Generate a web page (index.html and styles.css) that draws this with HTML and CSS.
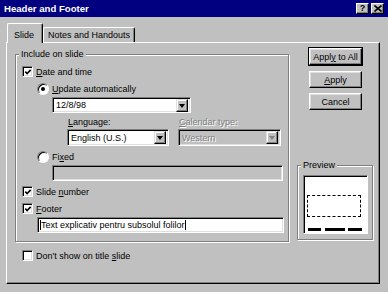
FILE: index.html
```html
<!DOCTYPE html>
<html lang="en">
<head>
  <meta charset="UTF-8">
  <title>Header and Footer</title>
  <link rel="stylesheet" href="styles.css">
</head>
<body>
  <div class="window">
    <div class="titlebar">
      <span class="title">Header and Footer</span>
      <div class="caption-btns">
        <span class="cbtn">?</span>
        <span class="cbtn">
          <svg width="8" height="7" viewBox="0 0 8 7"><path d="M0.5 0.5 L7.5 6.5 M7.5 0.5 L0.5 6.5" stroke="#000" stroke-width="1.6"/></svg>
        </span>
      </div>
    </div>

    <div class="tabs">
      <div class="tab active">Slide</div>
      <div class="tab">Notes and Handouts</div>
    </div>

    <div class="panel">
      <div class="left-col">
        <fieldset class="group include">
          <legend>Include on slide</legend>

          <div class="row ind0 first">
            <span class="check on"><svg width="9" height="9" viewBox="0 0 9 9"><path d="M1.5 3.5 L3.5 5.8 L7.5 1.5" fill="none" stroke="#000" stroke-width="1.8"/></svg></span>
            <span><u>D</u>ate and time</span>
          </div>

          <div class="row ind1 gap4">
            <span class="radio on"></span>
            <span><u>U</u>pdate automatically</span>
          </div>

          <div class="combo date-combo">
            <span class="combo-text">12/8/98</span>
            <span class="arrow"><i></i></span>
          </div>

          <div class="lang-row">
            <div class="field lang">
              <div class="field-label"><u>L</u>anguage:</div>
              <div class="combo">
                <span class="combo-text">English (U.S.)</span>
                <span class="arrow"><i></i></span>
              </div>
            </div>
            <div class="field calendar">
              <div class="field-label disabled"><u>C</u>alendar type:</div>
              <div class="combo off">
                <span class="combo-text">Western</span>
                <span class="arrow"><i></i></span>
              </div>
            </div>
          </div>

          <div class="row ind1 gap4">
            <span class="radio"></span>
            <span>Fi<u>x</u>ed</span>
          </div>

          <div class="textbox fixed-box"></div>

          <div class="row ind0 gap4">
            <span class="check on"><svg width="9" height="9" viewBox="0 0 9 9"><path d="M1.5 3.5 L3.5 5.8 L7.5 1.5" fill="none" stroke="#000" stroke-width="1.8"/></svg></span>
            <span>Slide <u>n</u>umber</span>
          </div>

          <div class="row ind0 gap4">
            <span class="check on"><svg width="9" height="9" viewBox="0 0 9 9"><path d="M1.5 3.5 L3.5 5.8 L7.5 1.5" fill="none" stroke="#000" stroke-width="1.8"/></svg></span>
            <span><u>F</u>ooter</span>
          </div>

          <div class="textbox footer-box white">
            <span class="caret"></span>Text explicativ pentru subsolul folilor<span class="caret"></span>
          </div>
        </fieldset>

        <div class="row dont-show">
          <span class="check"></span>
          <span>Don't show on title <u>s</u>lide</span>
        </div>
      </div>

      <div class="side-col">
        <button class="btn default">Appl<u>y</u> to All</button>
        <button class="btn"><u>A</u>pply</button>
        <button class="btn">Cancel</button>

        <fieldset class="group preview">
          <legend>Preview</legend>
          <div class="preview-page">
            <div class="dash-box"></div>
            <div class="bars">
              <span class="bar b1"></span>
              <span class="bar b2"></span>
              <span class="bar b3"></span>
            </div>
          </div>
        </fieldset>
      </div>
    </div>
  </div>
</body>
</html>
```

FILE: styles.css
```css
body {
  margin: 0;
  font-family: "Liberation Sans", Arial, sans-serif;
  font-size: 9px;
  color: #000;
}
.window {
  width: 388px;
  height: 292px;
  background: #c0c0c0;
  overflow: hidden;
}
.titlebar {
  height: 17px;
  background: #000080;
  display: flex;
  align-items: center;
  justify-content: space-between;
  padding: 0 4px 0 4px;
}
.title {
  color: #fff;
  font-weight: bold;
  font-size: 9.6px;
}
.caption-btns {
  display: flex;
  gap: 2px;
}
.cbtn {
  width: 13px;
  height: 11px;
  box-sizing: border-box;
  background: #c0c0c0;
  border: 1px solid;
  border-color: #fff #000 #000 #fff;
  box-shadow: inset -1px -1px #808080;
  display: flex;
  align-items: center;
  justify-content: center;
  font-weight: bold;
  font-size: 9px;
  line-height: 9px;
}

/* tabs */
.tabs {
  display: flex;
  align-items: flex-end;
  height: 25px;
  padding-left: 7px;
  position: relative;
  z-index: 1;
}
.tab {
  height: 15px;
  box-sizing: border-box;
  padding: 2px 4px 0 4px;
  border: 1px solid;
  border-color: #fff #000 transparent #fff;
  border-bottom: none;
  border-radius: 2px 2px 0 0;
  box-shadow: inset -1px 0 #808080;
  line-height: 11px;
}
.tab.active {
  height: 20px;
  margin-bottom: -1px;
  padding: 6px 8px 0 6px;
  background: #c0c0c0;
}

/* main panel */
.panel {
  margin-left: 6px;
  width: 374px;
  height: 242px;
  box-sizing: border-box;
  border: 1px solid;
  border-color: #fff #000 #000 #fff;
  box-shadow: inset -1px -1px #808080;
  display: flex;
}
.left-col {
  display: flex;
  flex-direction: column;
  margin-left: 8px;
}
.side-col {
  display: flex;
  flex-direction: column;
  margin-left: 8px;
  padding-top: 5px;
}

.group {
  margin: 6px 0 0 0;
  padding: 0;
  min-width: 0;
  box-sizing: border-box;
  border: 1px solid #808080;
  box-shadow: inset 1px 1px #fff, 1px 1px #fff;
}
.group legend {
  margin-left: 3px;
  padding: 0 2px;
  line-height: 11px;
  height: 11px;
  background: #c0c0c0;
}
.include {
  width: 274px;
  height: 193px;
}

.row {
  display: flex;
  align-items: center;
  gap: 3px;
  height: 13px;
}
.row.first { margin-top: 5px; }
.row.gap4 { margin-top: 4px; }
.ind0 { margin-left: 6px; }
.ind1 { margin-left: 21px; }

.check {
  width: 11px;
  height: 11px;
  box-sizing: border-box;
  background: #fff;
  border: 1px solid;
  border-color: #808080 #fff #fff #808080;
  box-shadow: inset 1px 1px #000, inset -1px -1px #dfdfdf;
  display: flex;
  align-items: center;
  justify-content: center;
}
.check svg { margin: 1px 0 0 1px; }
.radio {
  width: 12px;
  height: 12px;
  box-sizing: border-box;
  border-radius: 50%;
  background: #fff;
  border: 1px solid;
  border-color: #808080 #fff #fff #808080;
  box-shadow: inset 1px 1px #000;
  display: flex;
  align-items: center;
  justify-content: center;
}
.radio.on::after {
  content: "";
  width: 4px;
  height: 4px;
  border-radius: 50%;
  background: #000;
}

/* sunken fields */
.combo, .textbox {
  box-sizing: border-box;
  border: 1px solid;
  border-color: #808080 #fff #fff #808080;
  box-shadow: inset 1px 1px #000, inset -1px -1px #dfdfdf;
  background: #fff;
  display: flex;
  align-items: center;
}
.combo {
  height: 17px;
  padding: 2px 2px 2px 3px;
}
.combo-text { flex: 1; }
.arrow {
  width: 12px;
  height: 13px;
  box-sizing: border-box;
  background: #c0c0c0;
  border: 1px solid;
  border-color: #dfdfdf #000 #000 #dfdfdf;
  box-shadow: inset -1px -1px #808080, inset 1px 1px #fff;
  display: flex;
  align-items: center;
  justify-content: center;
}
.arrow i {
  border-left: 3.5px solid transparent;
  border-right: 3.5px solid transparent;
  border-top: 4px solid #000;
  margin-top: 1px;
}
.combo.off {
  background: #c0c0c0;
  color: #808080;
}
.combo.off .combo-text { text-shadow: 1px 1px #fff; }
.combo.off .arrow i { border-top-color: #808080; }

.date-combo {
  margin: 2px 0 0 36px;
  width: 139px;
  height: 16px;
}
.lang-row {
  display: flex;
  gap: 9px;
  margin: 4px 0 0 51px;
}
.field-label {
  height: 11px;
  line-height: 11px;
  margin-left: 1px;
}
.field .combo { margin-top: 1px; }
.lang { width: 102px; }
.calendar { width: 103px; }
.disabled {
  color: #808080;
  text-shadow: 1px 1px #fff;
}

.textbox {
  height: 16px;
}
.fixed-box {
  margin: 2px 0 0 36px;
  width: 231px;
  background: #c0c0c0;
}
.footer-box {
  margin: 2px 0 0 21px;
  width: 247px;
  padding-left: 2px;
}
.caret {
  width: 1px;
  height: 10px;
  background: #000;
}

.dont-show {
  margin: 7px 0 0 7px;
}

/* buttons */
.btn {
  width: 53px;
  height: 17px;
  margin-left: 12px;
  padding: 0;
  font: inherit;
  color: #000;
  background: #c0c0c0;
  border: 1px solid;
  border-color: #fff #000 #000 #fff;
  box-shadow: inset -1px -1px #808080, inset 1px 1px #dfdfdf;
}
.btn + .btn { margin-top: 5px; }
.btn.default {
  outline: 1px solid #000;
}
.btn.default + .btn { margin-top: 6px; }

.preview {
  margin-top: 50px;
  width: 76px;
  height: 80px;
}
.preview-page {
  margin: 4px 0 0 5px;
  width: 65px;
  height: 59px;
  box-sizing: border-box;
  background: #fff;
  border: 1px solid;
  border-color: #808080 #fff #fff #808080;
  box-shadow: inset 1px 1px #000;
  padding: 19px 0 0 3px;
}
.dash-box {
  width: 54px;
  height: 22px;
  box-sizing: border-box;
  border: 1px dashed #000;
}
.bars {
  display: flex;
  margin: 11px 0 0 1px;
}
.bar {
  height: 3px;
  background: #000;
}
.b1 { width: 13px; }
.b2 { width: 20px; margin-left: 4px; }
.b3 { width: 14px; margin-left: 3px; }
```
